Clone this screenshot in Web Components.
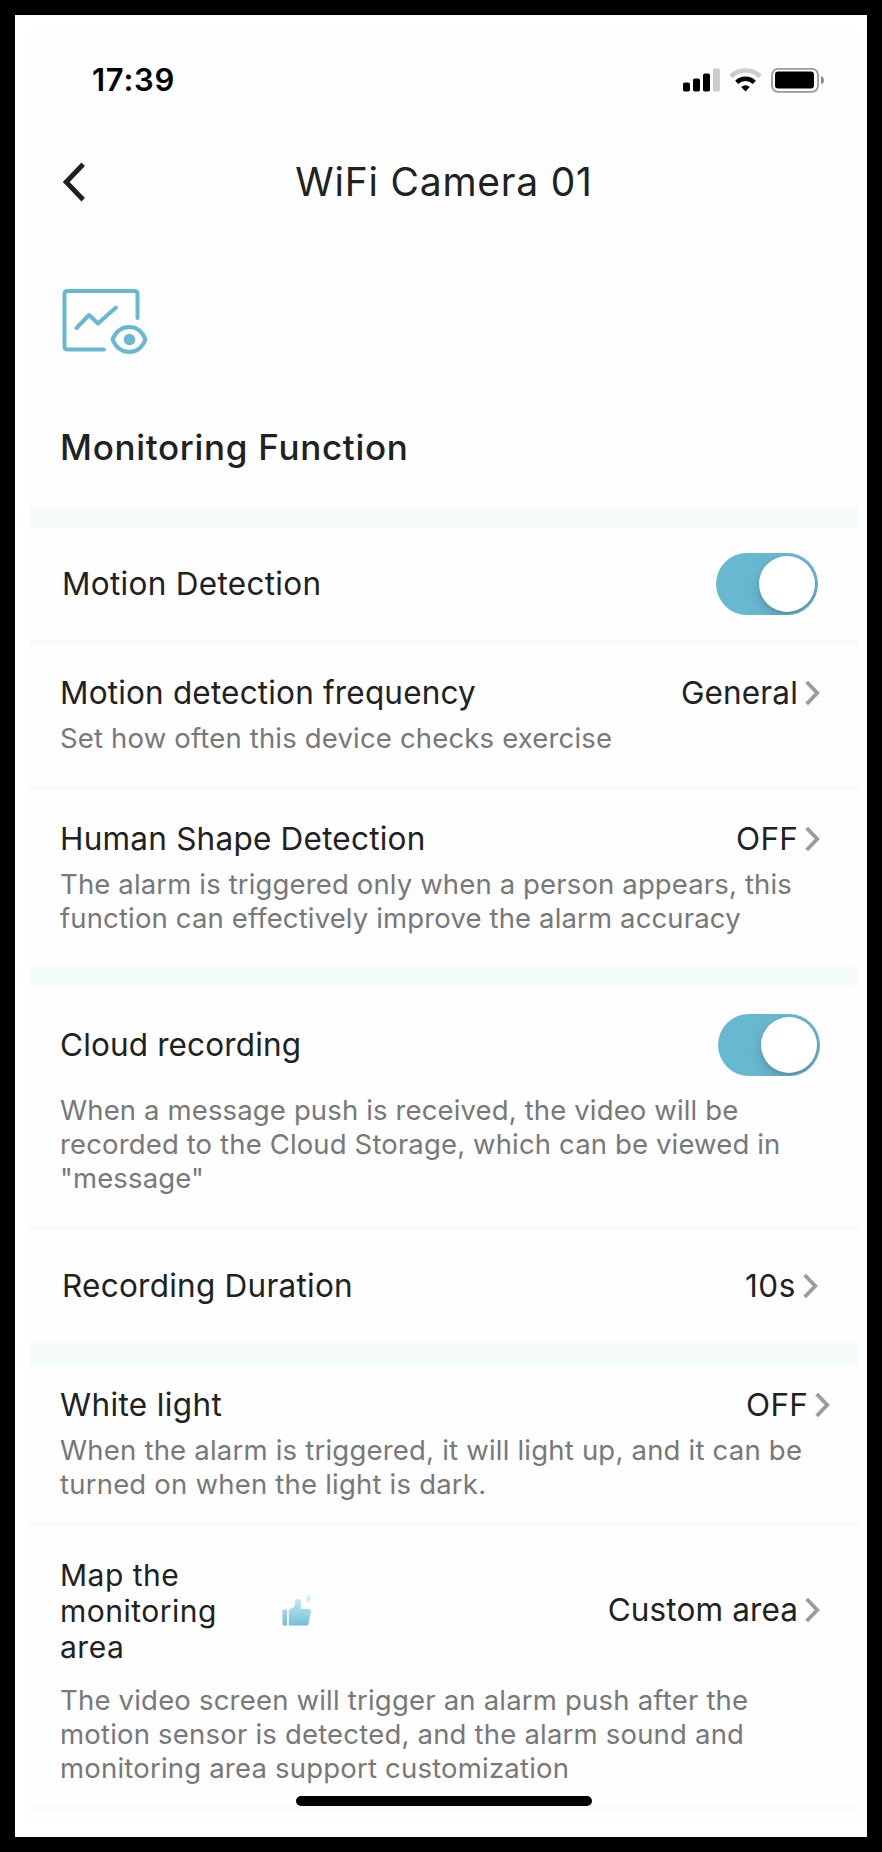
<!DOCTYPE html>
<html lang="en">
<head>
<meta charset="utf-8">
<title>WiFi Camera 01</title>
<style>
  :root {
    --text: #202121;
    --muted: #777878;
    --accent: #69b8d2;
    --divider: #f5fafb;
    --surface: #fefefe;
    --chevron: #9c9c9c;
  }

  html,
  body {
    margin: 0;
    background: #000;
  }

  body {
    font-family: Inter, "Liberation Sans", sans-serif;
    color: var(--text);
  }
</style>
</head>
<body>
<phone-screen>
  <status-bar slot="status" time="17:39"></status-bar>
  <nav-header>WiFi Camera 01</nav-header>
  <page-intro>Monitoring Function</page-intro>

  <settings-group>
    <setting-row class="single inset" style="--track: 0.3px">
      Motion Detection
      <toggle-switch slot="control" checked></toggle-switch>
    </setting-row>
    <setting-row value="General" style="--track: 0.18px; --value-track: 0.15px">
      Motion detection frequency
      <span slot="desc">Set how often this device checks exercise</span>
    </setting-row>
    <setting-row value="OFF" style="--desc-track: 0.14px">
      Human Shape Detection
      <span slot="desc">The alarm is triggered only when a person appears, this<br>function can effectively improve the alarm accuracy</span>
    </setting-row>
  </settings-group>

  <settings-group>
    <setting-row style="--pad-top: 28px; --desc-gap: 17px; --track: 0.14px; --desc-track: 0.14px">
      Cloud recording
      <toggle-switch slot="control" checked></toggle-switch>
      <span slot="desc">When a message push is received, the video will be<br>recorded to the Cloud Storage, which can be viewed in<br>"message"</span>
    </setting-row>
    <setting-row class="single inset" value="10s" style="--track: 0.25px; --value-track: 0.6px">
      Recording Duration
    </setting-row>
  </settings-group>

  <settings-group style="--band: 24px">
    <setting-row value="OFF" style="--pad-top: 21px; --pad-bottom: 21px; --pad-right: 28px; --track: 0.38px; --desc-track: 0.21px">
      White light
      <span slot="desc">When the alarm is triggered, it will light up, and it can be<br>turned on when the light is dark.</span>
    </setting-row>
    <setting-row value="Custom area" style="--desc-gap: 18px; --pad-bottom: 21px; --label-width: 190px; --label-size: 30px; --track: 0.5px; --value-track: 0.12px; --desc-track: 0.2px; --end-lift: 2px">
      Map the monitoring area
      <thumb-badge slot="badge"></thumb-badge>
      <span slot="desc">The video screen will trigger an alarm push after the<br>motion sensor is detected, and the alarm sound and<br>monitoring area support customization</span>
    </setting-row>
  </settings-group>
</phone-screen>

<script>
(function () {
  // Small helper: every element clones its own template into an open root.
  function define(name, html, setup) {
    const template = document.createElement("template");
    template.innerHTML = html;

    customElements.define(name, class extends HTMLElement {
      constructor() {
        super();
        this.attachShadow({ mode: "open" });
        this.shadowRoot.appendChild(template.content.cloneNode(true));
      }

      connectedCallback() {
        if (setup) {
          setup(this, this.shadowRoot);
        }
      }
    });
  }

  define("phone-screen", `
    <style>
      :host {
        display: block;
        position: relative;
        box-sizing: border-box;
        width: 882px;
        height: 1852px;
        border: 15px solid #000;
        background: #fff;
        padding: 15px 9px 15px 15px;
        overflow: hidden;
      }
      main {
        display: flex;
        flex-direction: column;
        height: 1792px;
        background: var(--surface);
      }
      .tail {
        height: 4px;
        background: var(--divider);
      }
      .home {
        position: absolute;
        left: 281px;
        bottom: 31px;
        width: 296px;
        height: 10px;
        border-radius: 5px;
        background: #000;
      }
    </style>
    <main>
      <slot name="status"></slot>
      <slot></slot>
      <div class="tail"></div>
    </main>
    <div class="home"></div>
  `);

  define("status-bar", `
    <style>
      :host {
        display: flex;
        justify-content: space-between;
        align-items: center;
        height: 99px;
        padding: 0 33px 0 62px;
        color: #000;
      }
      time {
        font-size: 31px;
        font-weight: 600;
        line-height: 36px;
        letter-spacing: 0.75px;
      }
      svg {
        display: block;
      }
    </style>
    <time></time>
    <svg width="142" height="26" viewBox="0 0 142 26">
      <rect x="0" y="15.500" width="7" height="9" rx="1.800"/>
      <rect x="10" y="11.500" width="7" height="13" rx="1.800"/>
      <rect x="20" y="6.500" width="7" height="18" rx="1.800"/>
      <rect x="30" y="1.500" width="7" height="23" rx="1.800" fill="#ccc"/>
      <path d="M47.800 9.300a21.500 21.500 0 0 1 29.400 0" fill="none" stroke="#ccc" stroke-width="4.500"/>
      <path d="M53.700 15.300a13 13 0 0 1 17.600 0" fill="none" stroke="#000" stroke-width="4.500"/>
      <path d="M62.500 24.500l-4.300-4.500a6.300 6.300 0 0 1 8.600 0z"/>
      <rect x="89" y="1.800" width="46" height="23" rx="6" fill="none" stroke="#999" stroke-width="1.800"/>
      <rect x="92" y="4.500" width="39" height="17" rx="3.200"/>
      <path d="M138 9q3 1.200 3 4.200t-3 4.200z" fill="#8b8b8b"/>
    </svg>
  `, (host, root) => {
    root.querySelector("time").textContent = host.getAttribute("time") ?? "";
  });

  define("nav-header", `
    <style>
      :host {
        display: grid;
        grid-template-columns: 60px 1fr 60px;
        align-items: center;
        height: 106px;
      }
      svg {
        display: block;
        margin-left: 32px;
      }
      h1 {
        margin: 0;
        text-align: center;
        font-size: 39px;
        font-weight: 400;
        line-height: 48px;
        letter-spacing: 0.78px;
      }
    </style>
    <svg width="24" height="40" viewBox="0 0 24 40">
      <path d="M21.200 2.300L4.200 20L21.200 37.700" fill="none" stroke="#202121" stroke-width="4.900"/>
    </svg>
    <h1><slot></slot></h1>
  `);

  define("page-intro", `
    <style>
      :host {
        display: block;
        height: 273px;
        padding: 0 30px;
      }
      svg {
        display: block;
        margin: 52px 0 0;
      }
      h2 {
        margin: 70px 0 0;
        font-size: 35px;
        font-weight: 500;
        line-height: 44px;
        letter-spacing: 0.7px;
      }
    </style>
    <svg width="88" height="68" viewBox="0 0 88 68" fill="none" stroke="#69b8d2"
      stroke-width="4" stroke-linecap="round" stroke-linejoin="round">
      <path d="M77.500 31V7q0-3-3-3H7.500q-3 0-3 3v52.500q0 3 3 3h36.500"/>
      <path d="M16.500 41l12.500-13 9 8.500 18-16"/>
      <path d="M52.500 52.500C56 44 62 40 69.500 40S82 44 85.500 52.500C82 61 77 65 69.500 65s-13.500-4-17-12.500z"/>
      <circle cx="69.500" cy="52.500" r="5.800" fill="#69b8d2" stroke="none"/>
    </svg>
    <h2><slot></slot></h2>
  `);

  // A tinted band followed by rows that are split by thin dividers.
  define("settings-group", `
    <style>
      :host {
        display: flex;
        flex-direction: column;
        gap: 4px;
        background: var(--divider);
        padding-top: var(--band, 20px);
      }
    </style>
    <slot></slot>
  `);

  define("setting-row", `
    <style>
      :host {
        display: block;
        background: var(--surface);
        padding: var(--pad-top, 31px) var(--pad-right, 38px) var(--pad-bottom, 31px) 30px;
      }
      :host(.single) {
        display: grid;
        align-items: center;
        height: 112px;
        padding-top: 0;
        padding-bottom: 0;
      }
      :host(.single) .desc {
        display: none;
      }
      :host(.inset) {
        padding-left: 32px;
        padding-right: 40px;
      }
      .line {
        display: flex;
        align-items: center;
      }
      .label {
        width: var(--label-width, auto);
        font-size: var(--label-size, 31.500px);
        line-height: 36px;
        letter-spacing: var(--track, 0.23px);
      }
      .end {
        display: flex;
        align-items: center;
        gap: 7px;
        margin-left: auto;
        padding-bottom: var(--end-lift, 0);
        font-size: 31.500px;
        line-height: 36px;
        letter-spacing: var(--value-track, 0.2px);
      }
      .value:empty,
      .value:empty + svg {
        display: none;
      }
      .desc {
        color: var(--muted);
        font-size: 27.500px;
        line-height: 34px;
        letter-spacing: var(--desc-track, 0.17px);
        white-space: nowrap;
      }
      .desc ::slotted(*) {
        display: block;
        margin-top: var(--desc-gap, 10px);
      }
    </style>
    <div class="line">
      <div class="label"><slot></slot></div>
      <slot name="badge"></slot>
      <div class="end">
        <span class="value"></span>
        <svg width="15" height="26" viewBox="0 0 15 26">
          <path d="M1.700 2L12.200 13L1.700 24" fill="none" stroke="#9c9c9c" stroke-width="3.900"/>
        </svg>
        <slot name="control"></slot>
      </div>
    </div>
    <div class="desc"><slot name="desc"></slot></div>
  `, (host, root) => {
    root.querySelector(".value").textContent = host.getAttribute("value") ?? "";
  });

  define("toggle-switch", `
    <style>
      :host {
        display: flex;
        justify-content: flex-start;
        box-sizing: border-box;
        width: 102px;
        height: 62px;
        padding: 3px;
        border-radius: 31px;
        background: #ddd;
        overflow: hidden;
      }
      :host([checked]) {
        justify-content: flex-end;
        background: var(--accent);
      }
      .knob {
        width: 56px;
        height: 56px;
        border-radius: 50%;
        background: #fff;
        box-shadow: 0 6px 16px rgba(0, 0, 0, 0.16), 0 2px 3px rgba(0, 0, 0, 0.1);
      }
    </style>
    <div class="knob"></div>
  `);

  define("thumb-badge", `
    <style>
      :host {
        display: block;
        margin-left: 31px;
        padding-bottom: 2px;
      }
      svg {
        display: block;
      }
    </style>
    <svg width="32" height="34" viewBox="0 0 32 34">
      <defs>
        <linearGradient id="fade" gradientUnits="userSpaceOnUse" x1="0" y1="3" x2="0" y2="33">
          <stop offset="0" stop-color="#c9f0fa"/>
          <stop offset="1" stop-color="#73bdd8"/>
        </linearGradient>
      </defs>
      <g fill="url(#fade)">
        <path d="M2.500 16.500h3.500v16h-3.500q-1 0-1-1v-14q0-1 1-1z"/>
        <path d="M7.800 17q5.700-2.200 6.200-6.500V8.500q0-2.500 3-2.500t3.200 3l-.5 7H27.500q2.700 0 2.300 2.500l-2 11.500q-.5 2.500-3 2.500H7.800z"/>
        <path d="M27.500 1q.7 4 3 5-2.300 1-3 5.500-.7-4.500-3-5.500 2.300-1 3-5z" fill="#c5f0fa"/>
      </g>
    </svg>
  `);
})();
</script>
</body>
</html>
